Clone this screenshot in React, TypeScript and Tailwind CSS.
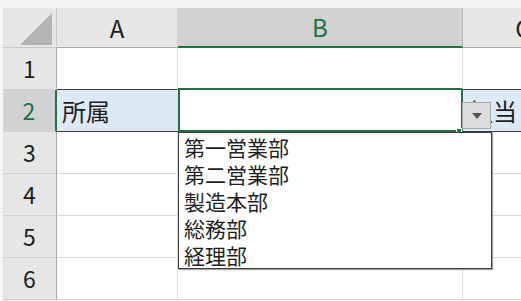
import React from "react";

const GREEN = "#217346";

const items = ["第一営業部", "第二営業部", "製造本部", "総務部", "経理部"];

const App = () => {
  const font = { fontFamily: '"Noto Sans CJK JP", "Noto Sans", sans-serif' };

  return (
    <div
      className="relative w-[521px] h-[301px] overflow-hidden bg-[#f4f4f4] pt-[8px] pl-[3px] text-[#1e1e1e]"
      style={font}
    >
      <div className="grid grid-cols-[54px_121px_285px_120px] grid-rows-[40px_42px_42px_42px_42px_42px_42px]">
        {/* Header row */}
        <div className="relative bg-[#e6e6e6] border-r border-b border-[#c8c8c8]">
          <svg className="absolute left-[17px] top-[5px]" width="32" height="32" viewBox="0 0 32 32">
            <polygon points="32,0 32,32 0,32" fill="#b4b4b4" />
          </svg>
        </div>
        <div className="flex items-center justify-center bg-[#e6e6e6] border-r border-b border-r-[#cfcfcf] border-b-[#a9a9a9] text-[24px]">
          A
        </div>
        <div
          className="flex items-center justify-center bg-[#d2d2d2] border-r border-r-[#b8b8b8] border-b-2 text-[24px]"
          style={{ borderBottomColor: GREEN, color: GREEN }}
        >
          B
        </div>
        <div className="flex items-center justify-center bg-[#e6e6e6] border-b border-b-[#a9a9a9] text-[24px]">
          C
        </div>

        {/* Row 1 */}
        <div className="flex items-center justify-center bg-[#e6e6e6] border-r border-b border-r-[#a9a9a9] border-b-[#cfcfcf] text-[23px]">
          1
        </div>
        <div className="bg-white border-r border-b border-r-[#d9d9d9] border-b-[#3c3c3c]" />
        <div className="bg-white border-r border-r-[#d9d9d9] border-b-2" style={{ borderBottomColor: GREEN }} />
        <div className="bg-white border-b border-b-[#3c3c3c]" />

        {/* Row 2 */}
        <div
          className="flex items-center justify-center bg-[#d2d2d2] border-r-2 border-b border-b-[#cfcfcf] text-[23px]"
          style={{ borderRightColor: GREEN, color: GREEN }}
        >
          2
        </div>
        <div className="flex items-center bg-[#dde9f5] border-b border-b-[#3c3c3c] pl-[5px] text-[24px] leading-none">
          所属
        </div>
        <div
          className="bg-white border-l-2 border-r-2 border-b-2"
          style={{ borderColor: GREEN }}
        />
        <div className="flex items-center bg-[#dde9f5] border-b border-b-[#3c3c3c] pl-[6px] text-[24px] leading-none whitespace-nowrap">
          担当
        </div>

        {/* Rows 3-6 */}
        {[3, 4, 5, 6].map((n) => (
          <React.Fragment key={n}>
            <div className="flex items-center justify-center bg-[#e6e6e6] border-r border-b border-r-[#a9a9a9] border-b-[#cfcfcf] text-[23px]">
              {n}
            </div>
            <div className="bg-white border-r border-b border-[#d9d9d9]" />
            <div className="bg-white border-r border-b border-[#d9d9d9]" />
            <div className="bg-white border-b border-[#d9d9d9]" />
          </React.Fragment>
        ))}
      </div>

      {/* Fill handle */}
      <div
        className="absolute left-[456px] top-[128px] w-[6px] h-[5px] border border-white"
        style={{ backgroundColor: GREEN }}
      />

      {/* Dropdown button */}
      <div className="absolute left-[462px] top-[102px] w-[29px] h-[27px] bg-[#dddddd] border border-[#a8a8a8] flex items-center justify-center">
        <svg width="10" height="6" viewBox="0 0 10 6">
          <polygon points="0,0 10,0 5,6" fill="#555" />
        </svg>
      </div>

      {/* Dropdown list */}
      <div className="absolute left-[178px] top-[132px] w-[314px] h-[137px] bg-white border border-[#3a3a3a] shadow-[1px_1px_1px_rgba(0,0,0,0.35)] pl-[5px] pt-[1px]">
        {items.map((item) => (
          <div key={item} className="h-[27px] leading-[27px] text-[21px] whitespace-nowrap">
            {item}
          </div>
        ))}
      </div>
    </div>
  );
};

export default App;
